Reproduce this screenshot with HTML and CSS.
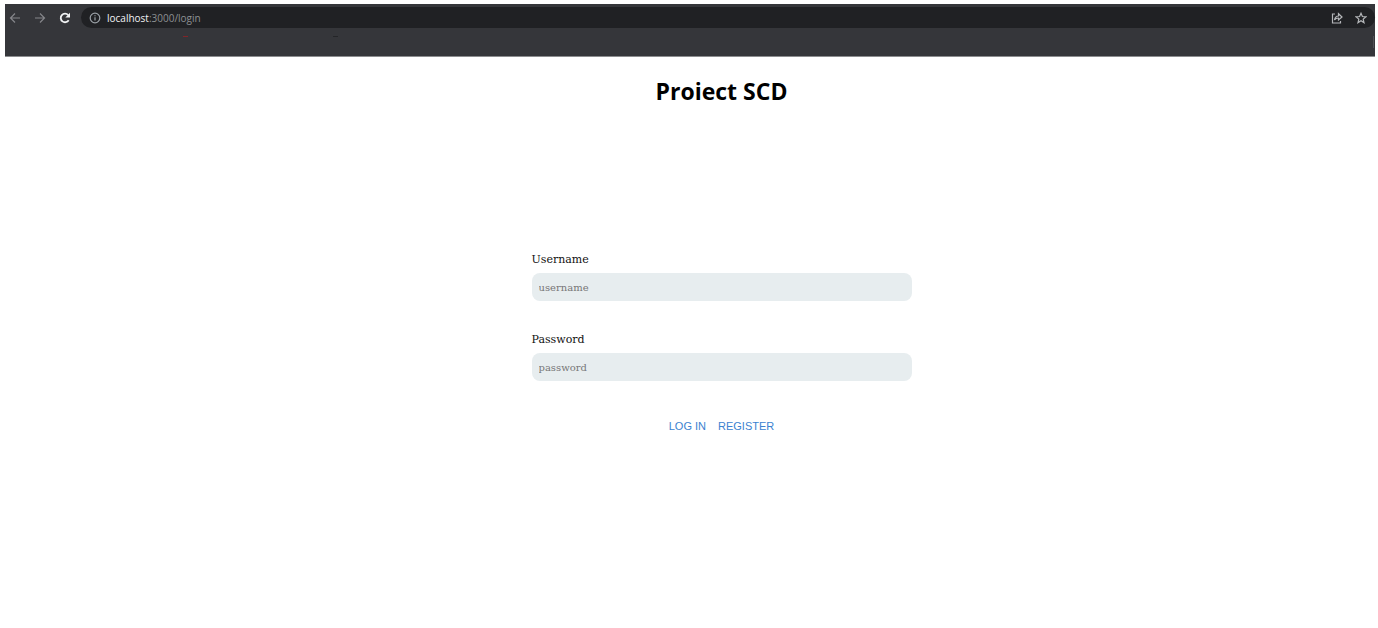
FILE: index.html
```html
<!DOCTYPE html>
<html lang="en">
<head>
<meta charset="utf-8">
<meta name="viewport" content="width=device-width, initial-scale=1">
<title>Proiect SCD</title>
<link rel="stylesheet" href="styles.css">
</head>
<body>
<header class="browser">
  <div class="toolbar">
    <nav class="nav" aria-label="Browser navigation">
      <button class="icon-button muted" type="button" aria-label="Back"><svg viewBox="0 0 12 12"><path d="M11 6H1.5M6 1.5 1.5 6 6 10.5"/></svg></button>
      <button class="icon-button muted" type="button" aria-label="Forward"><svg viewBox="0 0 12 12"><path d="M1 6h9.500M6 1.500 10.500 6 6 10.500"/></svg></button>
      <button class="icon-button reload" type="button" aria-label="Reload"><svg viewBox="0 0 12 12"><path d="M9.700 8.200A4.300 4.300 0 1 1 9.200 3"/><path class="solid" d="M11 .8v4.700H6.300z"/></svg></button>
    </nav>
    <div class="address">
      <svg class="info" viewBox="0 0 12 12" aria-hidden="true"><circle cx="6" cy="6" r="4.800"/><path d="M6 5.300v3.200M6 3.300v1"/></svg>
      <span class="url"><span class="host">localhost</span>:3000/login</span>
      <div class="actions">
        <button class="icon-button" type="button" aria-label="Share"><svg viewBox="0 0 12 12"><path d="M4 2H1.500v9h8V9M3.500 8C4 5 5.500 4 7.500 4V1.700L11 5 7.500 8V6C5.500 6 4.300 6.700 3.500 8z"/></svg></button>
        <button class="icon-button" type="button" aria-label="Bookmark"><svg viewBox="0 0 12 12"><path d="m6 1.300 1.400 3.200 3.500.3-2.700 2.300.8 3.500-3-1.900-3 1.900.8-3.500L1.100 4.800l3.500-.3z"/></svg></button>
      </div>
    </div>
  </div>
  <div class="bookmarks"><span class="mark red"></span><span class="mark dark"></span><span class="divider"></span></div>
</header>
<main class="page">
  <h1 class="title">Proiect SCD</h1>
  <form class="login">
    <div class="field">
      <label class="label" for="username">Username</label>
      <input class="input" id="username" type="text" placeholder="username">
    </div>
    <div class="field">
      <label class="label" for="password">Password</label>
      <input class="input" id="password" type="password" placeholder="password">
    </div>
    <div class="buttons">
      <button class="text-button" type="button">LOG IN</button>
      <button class="text-button" type="button">REGISTER</button>
    </div>
  </form>
</main>
</body>
</html>
```
FILE: styles.css
```css
* { box-sizing: border-box; }
body {
  margin: 0;
  padding: 4px 3px 0 5px;
  background: #fff;
  font-family: "Liberation Sans", sans-serif;
}
button {
  padding: 0;
  border: 0;
  background: none;
  cursor: pointer;
}
svg {
  display: block;
  width: 12px;
  height: 12px;
  fill: none;
  stroke: currentColor;
  stroke-width: 1.2;
}
.browser {
  background: #35363a;
  border-bottom: 1px solid #8c8d8f;
}
.toolbar {
  display: flex;
  align-items: center;
  padding-top: 3px;
}
.nav {
  display: flex;
  gap: 13px;
  padding-left: 4px;
  width: 76px;
}
.icon-button { color: #b4b6b9; }
.muted { color: #85868a; }
.reload { color: #f1f3f4; }
.reload svg { stroke-width: 1.8; }
.reload .solid {
  fill: currentColor;
  stroke: none;
}
.address {
  display: flex;
  flex: 1;
  align-items: center;
  gap: 6px;
  height: 21px;
  padding: 0 8px;
  border-radius: 11px;
  background: #202124;
  color: #9aa0a6;
}
.url {
  font: 10px "Open Sans", sans-serif;
  color: #8d9093;
}
.host {
  color: #f1f3f4;
  -webkit-text-stroke: 0;
}
.actions {
  display: flex;
  gap: 12px;
  margin-left: auto;
}
.bookmarks {
  display: flex;
  height: 28px;
  padding: 8px 1px 0 178px;
}
.mark {
  width: 5px;
  height: 1px;
}
.red { background: #812529; }
.dark {
  margin-left: 145px;
  background: #242528;
}
.divider {
  width: 1px;
  height: 12px;
  margin-left: auto;
  background: #505155;
}
.page {
  display: flex;
  flex-direction: column;
  align-items: center;
  padding: 16px 0 24px 63px;
}
.title {
  margin: 0;
  font: bold 23px/36px "Open Sans", sans-serif;
  color: #000;
}
.login {
  display: flex;
  flex-direction: column;
  gap: 30px;
  width: 100%;
  max-width: 380px;
  margin-top: 142px;
}
.field {
  display: flex;
  flex-direction: column;
  gap: 4px;
}
.label {
  font: 11px/18px "DejaVu Serif", serif;
  color: #111;
}
.input {
  width: 100%;
  height: 28px;
  padding: 0 7px;
  border: 0;
  border-radius: 8px;
  background: #e7edef;
  font: 10px "DejaVu Serif", serif;
  color: #222;
}
.input::placeholder { color: #777; }
.buttons {
  display: flex;
  justify-content: center;
  gap: 12px;
  padding-top: 5px;
}
.text-button {
  font: 11px/20px "Liberation Sans", sans-serif;
  color: #3b82d0;
}
```
